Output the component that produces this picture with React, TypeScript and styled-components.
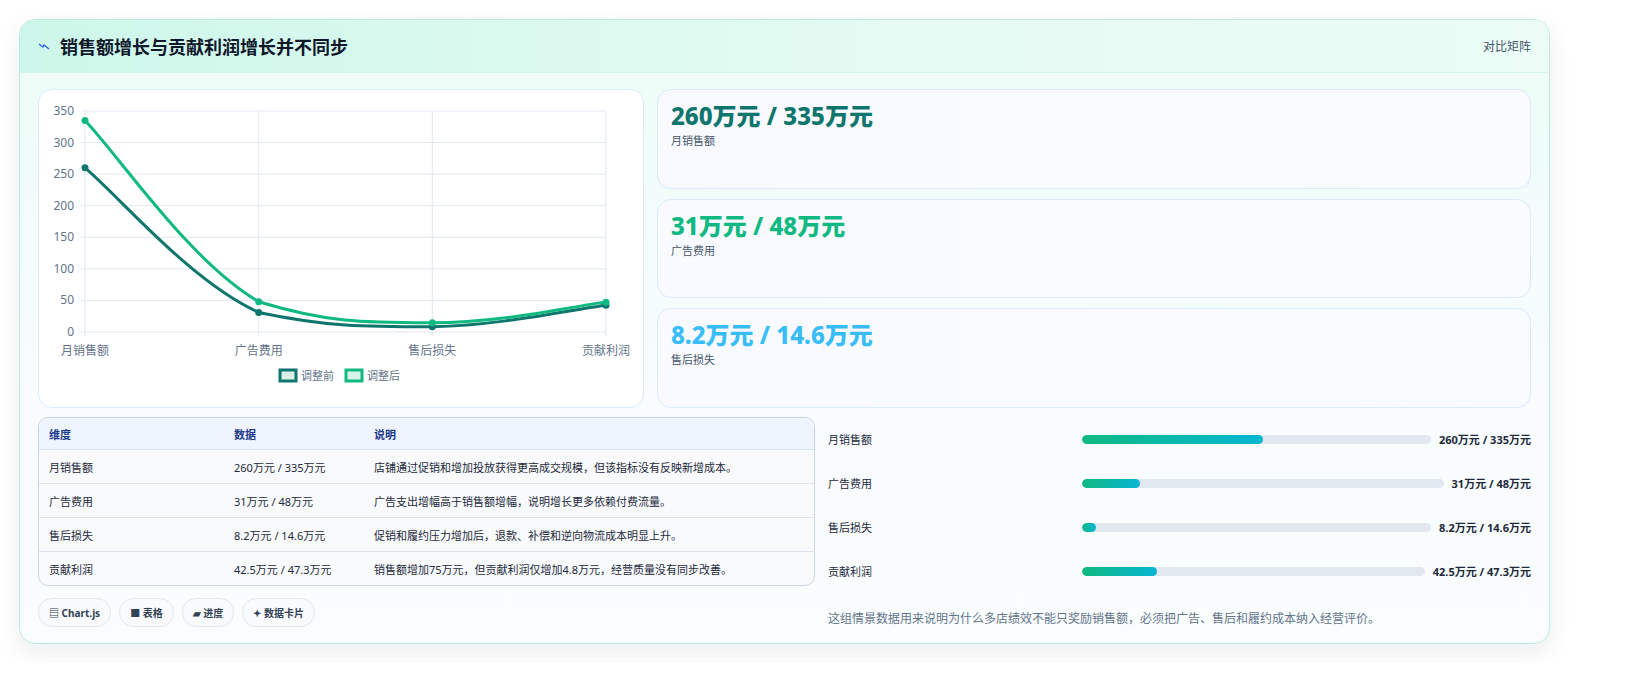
import React from 'react';
import styled, { createGlobalStyle } from 'styled-components';

const GlobalStyle = createGlobalStyle`
  body {
    margin: 0;
    background: #ffffff;
    font-family: 'Noto Sans', 'Noto Sans CJK SC', sans-serif;
    color: #1e293b;
  }
`;

const before = [260, 31, 8.2, 42.5];
const after = [335, 48, 14.6, 47.3];
const cats = ['月销售额', '广告费用', '售后损失', '贡献利润'];
const xs = [46, 219.7, 393.3, 567];
const yOf = (v: number) => 242 - v * (221 / 350);

// smooth line, control points clamped so it never dips below the lower neighbour
const curve = (vals: number[]) => {
  const p = vals.map((v, i) => [xs[i], yOf(v)]);
  let d = `M${p[0][0]},${p[0][1]}`;
  for (let i = 0; i < p.length - 1; i++) {
    const p0 = p[i - 1] || p[i];
    const p3 = p[i + 2] || p[i + 1];
    const t = 0.2;
    const lo = Math.max(p[i][1], p[i + 1][1]);
    const c1 = [p[i][0] + (p[i + 1][0] - p0[0]) * t, Math.min(lo, p[i][1] + (p[i + 1][1] - p0[1]) * t)];
    const c2 = [p[i + 1][0] - (p3[0] - p[i][0]) * t, Math.min(lo, p[i + 1][1] - (p3[1] - p[i][1]) * t)];
    d += ` C${c1[0]},${c1[1]} ${c2[0]},${c2[1]} ${p[i + 1][0]},${p[i + 1][1]}`;
  }
  return d;
};

const rows = [
  { k: '月销售额', v: '260万元 / 335万元', d: '店铺通过促销和增加投放获得更高成交规模，但该指标没有反映新增成本。' },
  { k: '广告费用', v: '31万元 / 48万元', d: '广告支出增幅高于销售额增幅，说明增长更多依赖付费流量。' },
  { k: '售后损失', v: '8.2万元 / 14.6万元', d: '促销和履约压力增加后，退款、补偿和逆向物流成本明显上升。' },
  { k: '贡献利润', v: '42.5万元 / 47.3万元', d: '销售额增加75万元，但贡献利润仅增加4.8万元，经营质量没有同步改善。' },
];

const bars = [
  { k: '月销售额', v: '260万元 / 335万元', p: 52 },
  { k: '广告费用', v: '31万元 / 48万元', p: 16 },
  { k: '售后损失', v: '8.2万元 / 14.6万元', p: 4 },
  { k: '贡献利润', v: '42.5万元 / 47.3万元', p: 22 },
];

const stats = [
  { v: '260万元 / 335万元', l: '月销售额', c: '#0f766e' },
  { v: '31万元 / 48万元', l: '广告费用', c: '#10b981' },
  { v: '8.2万元 / 14.6万元', l: '售后损失', c: '#38bdf8' },
];

const Card = styled.div`
  width: 1529px;
  margin: 19px;
  border: 1px solid #b9ece0;
  border-radius: 16px;
  background: linear-gradient(180deg, #ecfdf7 0%, #f8fcff 60%, #f9fdfd 100%);
  box-shadow: 0 8px 24px rgba(15, 23, 42, 0.08);
  overflow: hidden;
`;
const Header = styled.div`
  height: 52px;
  display: flex;
  align-items: center;
  justify-content: space-between;
  padding: 0 18px;
  background: linear-gradient(90deg, #cdf7ea 0%, #e6fbf4 60%, #ebfcf7 100%);
  border-bottom: 1px solid #d6f3ea;
`;
const Title = styled.h1`
  margin: 0;
  font-size: 18px;
  font-weight: 700;
  color: #0f172a;
  display: flex;
  align-items: center;
  gap: 10px;
`;
const Tag = styled.span`
  font-size: 12px;
  color: #475569;
`;
const Body = styled.div`
  padding: 16px 18px 16px 18px;
  display: flex;
  flex-direction: column;
  gap: 14px;
`;
const TopGrid = styled.div`
  display: grid;
  grid-template-columns: 606px 1fr;
  gap: 13px;
  height: 314px;
`;
const ChartCard = styled.div`
  background: #fff;
  border: 1px solid #dbeafe;
  border-radius: 14px;
`;
const Stats = styled.div`
  display: grid;
  grid-template-rows: repeat(3, 1fr);
  gap: 10px;
`;
const Stat = styled.div`
  background: linear-gradient(90deg, #f8faff, #f8fbff);
  border: 1px solid #dbeafe;
  border-radius: 14px;
  padding: 10px 13px;
`;
const StatValue = styled.div<{ $c: string }>`
  font-size: 24px;
  font-weight: 800;
  color: ${(p) => p.$c};
  line-height: 32px;
`;
const StatLabel = styled.div`
  font-size: 11px;
  color: #475569;
`;
const BottomGrid = styled.div`
  display: grid;
  grid-template-columns: 777px 1fr;
  gap: 13px;
`;
const Left = styled.div`
  display: flex;
  flex-direction: column;
  gap: 12px;
`;
const Table = styled.div`
  border: 1px solid #cbd5e1;
  border-radius: 10px;
  overflow: hidden;
  background: #f8fafc;
`;
const TRow = styled.div<{ $head?: boolean }>`
  display: grid;
  grid-template-columns: 185px 140px 1fr;
  padding: 0 10px;
  height: ${(p) => (p.$head ? 31 : 33)}px;
  align-items: center;
  font-size: 11px;
  color: ${(p) => (p.$head ? '#1e3a8a' : '#1e293b')};
  background: ${(p) => (p.$head ? '#eef5ff' : 'transparent')};
  font-weight: ${(p) => (p.$head ? 600 : 400)};
  & + & {
    border-top: 1px solid #dbe3ee;
  }
`;
const Chips = styled.div`
  display: flex;
  gap: 8px;
`;
const Chip = styled.span`
  font-size: 10px;
  font-weight: 700;
  color: #334155;
  border: 1px solid #e2e8f0;
  background: #f8fafc;
  border-radius: 14px;
  padding: 6px 10px;
`;
const Right = styled.div`
  display: flex;
  flex-direction: column;
`;
const BarRow = styled.div`
  height: 44px;
  display: grid;
  grid-template-columns: 246px 1fr auto;
  gap: 8px;
  align-items: center;
  font-size: 11px;
`;
const Track = styled.div`
  height: 9px;
  background: #e2e8f0;
  border-radius: 5px;
  overflow: hidden;
`;
const Fill = styled.div`
  height: 100%;
  border-radius: 5px;
  background: linear-gradient(90deg, #10b981, #06b6d4);
`;
const BarValue = styled.span`
  font-weight: 700;
  color: #1e293b;
`;
const Note = styled.p`
  margin: 16px 0 0;
  font-size: 12px;
  color: #64748b;
`;

const Chart = () => (
  <svg width="606" height="312" viewBox="0 0 606 312">
    {[0, 50, 100, 150, 200, 250, 300, 350].map((v) => (
      <g key={v}>
        <line x1={42} x2={567} y1={yOf(v)} y2={yOf(v)} stroke="#e2e8f0" />
        <text x={35} y={yOf(v) + 4} fontSize="12" fill="#64748b" textAnchor="end">{v}</text>
      </g>
    ))}
    {xs.map((x, i) => (
      <g key={i}>
        <line x1={x} x2={x} y1={21} y2={246} stroke="#e2e8f0" />
        <text x={x} y={265} fontSize="12" fill="#64748b" textAnchor="middle">{cats[i]}</text>
      </g>
    ))}
    <path d={curve(before)} fill="none" stroke="#0f766e" strokeWidth="3" />
    <path d={curve(after)} fill="none" stroke="#10b981" strokeWidth="3" />
    {before.map((v, i) => <circle key={'b' + i} cx={xs[i]} cy={yOf(v)} r="3.5" fill="#0f766e" />)}
    {after.map((v, i) => <circle key={'a' + i} cx={xs[i]} cy={yOf(v)} r="3.5" fill="#10b981" />)}
    <rect x={241} y={280} width={16} height={11} fill="#dbeee9" stroke="#0f766e" strokeWidth="3" />
    <text x={262} y={290} fontSize="11" fill="#64748b">调整前</text>
    <rect x={307} y={280} width={16} height={11} fill="#d6f5e8" stroke="#10b981" strokeWidth="3" />
    <text x={328} y={290} fontSize="11" fill="#64748b">调整后</text>
  </svg>
);

const App = () => (
  <>
    <GlobalStyle />
    <Card>
      <Header>
        <Title>
          <svg width="12" height="8" viewBox="0 0 12 8">
            <path d="M1 2 L5 5 L6 3 L11 7" fill="none" stroke="#2563eb" strokeWidth="1.3" />
          </svg>
          销售额增长与贡献利润增长并不同步
        </Title>
        <Tag>对比矩阵</Tag>
      </Header>
      <Body>
        <TopGrid>
          <ChartCard>
            <Chart />
          </ChartCard>
          <Stats>
            {stats.map((s) => (
              <Stat key={s.l}>
                <StatValue $c={s.c}>{s.v}</StatValue>
                <StatLabel>{s.l}</StatLabel>
              </Stat>
            ))}
          </Stats>
        </TopGrid>
        <BottomGrid>
          <Left>
            <Table>
              <TRow $head>
                <span>维度</span>
                <span>数据</span>
                <span>说明</span>
              </TRow>
              {rows.map((r) => (
                <TRow key={r.k}>
                  <span>{r.k}</span>
                  <span>{r.v}</span>
                  <span>{r.d}</span>
                </TRow>
              ))}
            </Table>
            <Chips>
              <Chip>▤ Chart.js</Chip>
              <Chip>■ 表格</Chip>
              <Chip>▰ 进度</Chip>
              <Chip>✦ 数据卡片</Chip>
            </Chips>
          </Left>
          <Right>
            {bars.map((b) => (
              <BarRow key={b.k}>
                <span>{b.k}</span>
                <Track>
                  <Fill style={{ width: `${b.p}%` }} />
                </Track>
                <BarValue>{b.v}</BarValue>
              </BarRow>
            ))}
            <Note>这组情景数据用来说明为什么多店绩效不能只奖励销售额，必须把广告、售后和履约成本纳入经营评价。</Note>
          </Right>
        </BottomGrid>
      </Body>
    </Card>
  </>
);

export default App;
